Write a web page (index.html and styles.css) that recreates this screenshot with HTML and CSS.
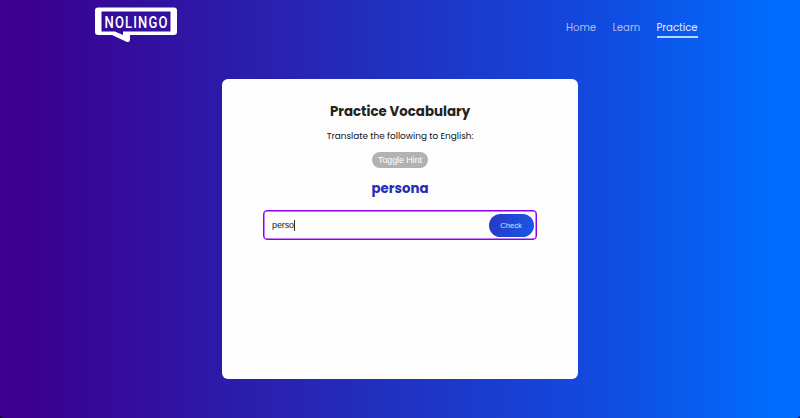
FILE: index.html
```html
<!DOCTYPE html>
<html lang="en">
<head>
<meta charset="utf-8">
<title>Nolingo</title>
<link rel="stylesheet" href="styles.css">
</head>
<body>
<div class="app">
  <header class="header">
    <svg class="logo" viewBox="0 0 82 36" width="82" height="36" role="img" aria-label="Nolingo">
      <path fill="#fff" fill-rule="evenodd" d="M3 .5H79Q82 .5 82 3.500V25Q82 28 79 28H35V33Q35 35.500 32 35L17 28H3Q0 28 0 25V3.500Q0 .5 3 .5ZM6.500 4.500V24.500H20L28 28V24.500H75.500V4.500Z"/>
      <text class="logo-text" transform="translate(9.500 20.500) scale(.84 1.120)" textLength="75" lengthAdjust="spacing">NOLINGO</text>
    </svg>
    <nav class="nav">
      <a class="link home">Home</a>
      <a class="link learn">Learn</a>
      <a class="link practice active">Practice</a>
    </nav>
  </header>
  <main class="card">
    <h1 class="title">Practice Vocabulary</h1>
    <p class="prompt">Translate the following to English:</p>
    <button class="hint">Toggle Hint</button>
    <h2 class="word">persona</h2>
    <div class="answer">
      <span class="typed">perso</span>
      <button class="check">Check</button>
    </div>
  </main>
</div>
</body>
</html>
```
FILE: styles.css
```css
* { box-sizing: border-box; }
body {
  margin: 0;
  background: #100b20;
  font-family: Poppins, Inter, sans-serif;
}
.app {
  height: 418px;
  overflow: hidden;
  border-radius: 0 0 4px 4px;
  background: linear-gradient(90deg, #3d0090 0%, #3b008f 4%, #2032c2 50%, #114be0 76%, #006dff 97%, #006dff 100%);
}
.header {
  height: 79px;
  padding: 7px 102.500px 0 95px;
  display: flex;
  justify-content: space-between;
  align-items: flex-start;
}
.logo { display: block; }
.logo-text {
  fill: #fff;
  font: 500 15.500px Roboto, sans-serif;
}
.nav {
  display: flex;
  gap: 16.500px;
  margin-top: 12px;
}
.link {
  height: 19px;
  font-size: 10.100px;
  line-height: 18px;
  color: #b5bce2;
  white-space: nowrap;
}
.home { width: 30px; }
.learn { width: 27.500px; }
.practice { width: 41px; }
.active {
  color: #e4edff;
  border-bottom: 2px solid #b4d6ff;
}
.card {
  width: 356px;
  height: 300px;
  margin: 0 auto;
  padding: 22px 40.500px 0;
  display: flex;
  flex-direction: column;
  align-items: center;
  background: #fdfdfd;
  border-radius: 6px;
}
h1, h2, p { margin: 0; white-space: nowrap; }
.title {
  font-size: 13.350px;
  line-height: 21px;
  font-weight: 700;
  color: #222;
}
.prompt {
  margin-top: 7px;
  font-size: 8.900px;
  line-height: 15px;
  color: #111;
}
button {
  border: 0;
  padding: 0;
  color: #fff;
  font-family: "Liberation Sans", sans-serif;
  white-space: nowrap;
}
.hint {
  width: 56px;
  height: 16px;
  margin-top: 8px;
  border-radius: 8px;
  background: #b2b2b2;
  font-size: 8.800px;
}
.word {
  margin-top: 11px;
  font-size: 13.350px;
  line-height: 20px;
  font-weight: 700;
  color: #2a2ab8;
}
.answer {
  width: 274px;
  height: 30px;
  margin-top: 11px;
  padding: 0 2.500px 0 8px;
  display: flex;
  align-items: center;
  justify-content: space-between;
  border: 1.500px solid #8b00f0;
  box-shadow: inset 0 0 0 .5px #8b00f0;
  border-radius: 4px;
}
.typed {
  font: 9px/11px "Liberation Sans", sans-serif;
  color: #222;
  border-right: 1px solid #333;
  margin-right: auto;
  letter-spacing: -.1px;
}
.check {
  width: 45px;
  height: 23px;
  border-radius: 12px;
  background: linear-gradient(100deg, #2938c6, #1958e4);
  color: #d8e3ff;
  font-size: 7.600px;
}
```
